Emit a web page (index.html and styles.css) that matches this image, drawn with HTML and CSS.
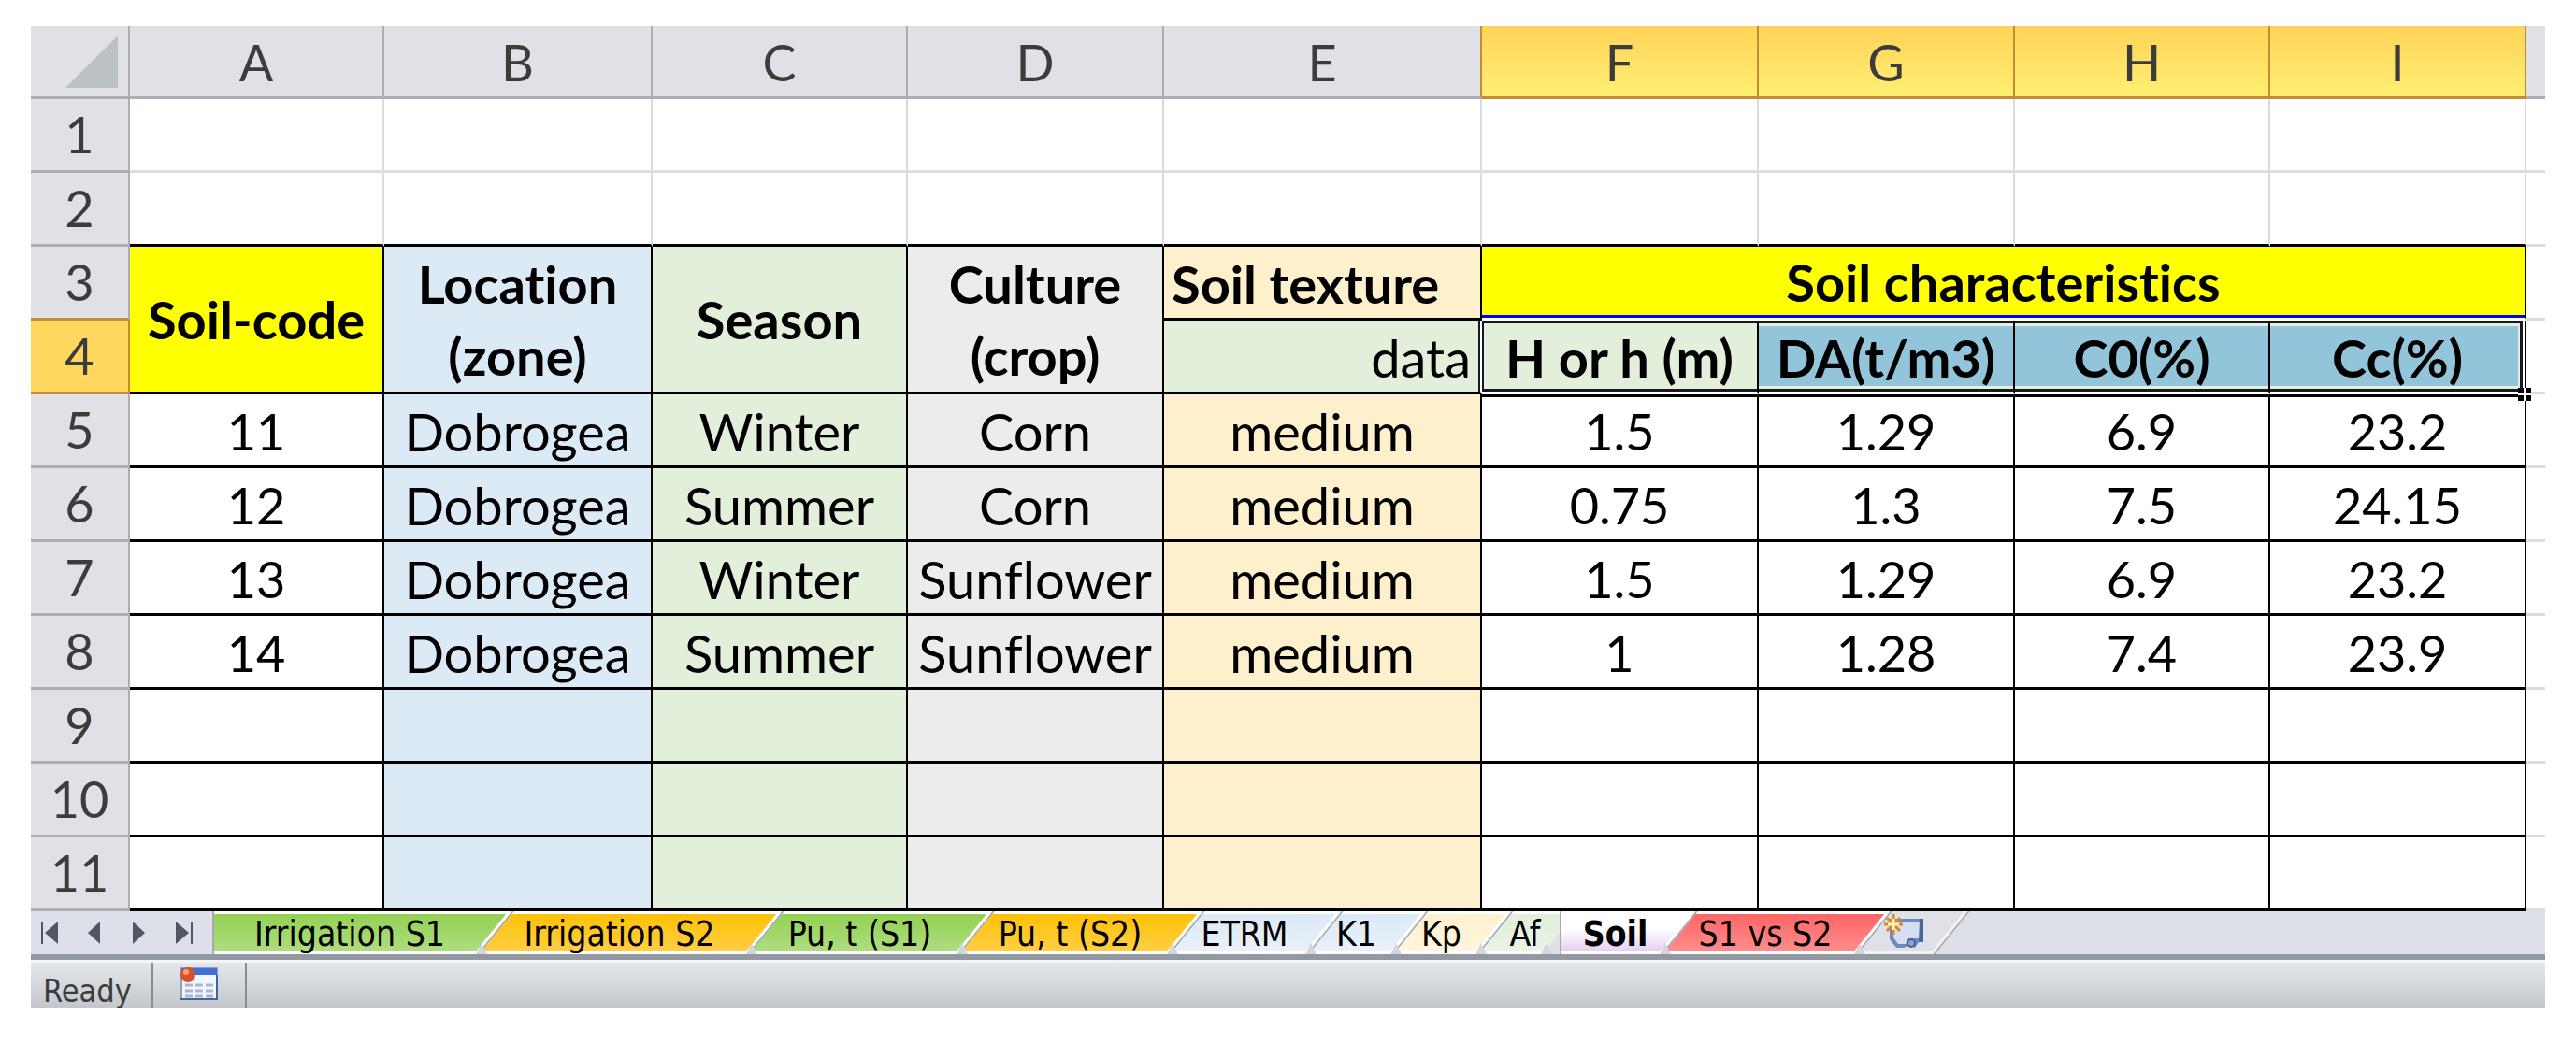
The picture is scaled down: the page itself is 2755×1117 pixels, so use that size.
FILE: index.html
```
<!DOCTYPE html>
<html lang="en">
<head>
    <meta charset="UTF-8">
    <meta name="viewport" content="width=device-width, initial-scale=1.0">
    <title>Soil</title>
    <link rel="stylesheet" href="styles.css">
</head>
<body>
    <main class="workbook">
        <table class="sheet">
            <colgroup>
                <col class="w-head">
                <col class="w-a">
                <col class="w-b">
                <col class="w-c">
                <col class="w-d">
                <col class="w-e">
                <col class="w-f">
                <col class="w-g">
                <col class="w-h">
                <col class="w-i">
                <col class="w-rest">
            </colgroup>
            <thead>
                <tr>
                    <th class="corner"><svg viewBox="0 0 56 56" aria-hidden="true"><path d="M56 0V56H0Z" fill="#bcc1c5"/></svg></th>
                    <th>A</th>
                    <th>B</th>
                    <th>C</th>
                    <th>D</th>
                    <th class="before-active">E</th>
                    <th class="active">F</th>
                    <th class="active">G</th>
                    <th class="active">H</th>
                    <th class="active">I</th>
                    <th class="rest"></th>
                </tr>
            </thead>
            <tbody>
                <tr><th>1</th><td></td><td></td><td></td><td></td><td></td><td></td><td></td><td></td><td></td><td class="rest"></td></tr>
                <tr class="last-blank"><th>2</th><td></td><td></td><td></td><td></td><td></td><td></td><td></td><td></td><td></td><td class="rest"></td></tr>
            </tbody>
            <tbody class="data">
                <tr>
                    <th class="above-active">3</th>
                    <td class="title tall yellow" rowspan="2">Soil-code</td>
                    <td class="title tall blue" rowspan="2">Location<br>(zone)</td>
                    <td class="title tall green" rowspan="2">Season</td>
                    <td class="title tall gray" rowspan="2">Culture<br>(crop)</td>
                    <td class="title cream left">Soil texture</td>
                    <td class="title yellow group" colspan="4">Soil characteristics</td>
                    <td class="rest"></td>
                </tr>
                <tr>
                    <th class="active-row">4</th>
                    <td class="green right before-sel">data</td>
                    <td class="title green sel first">H or h (m)</td>
                    <td class="title teal sel">DA(t/m3)</td>
                    <td class="title teal sel">C0(%)</td>
                    <td class="title teal sel last">Cc(%)<span class="handle"></span></td>
                    <td class="rest"></td>
                </tr>
                <tr class="below-sel"><th>5</th><td class="num">11</td><td class="blue">Dobrogea</td><td class="green">Winter</td><td class="gray">Corn</td><td class="cream">medium</td><td class="num edge">1.5</td><td class="num edge">1.29</td><td class="num edge">6.9</td><td class="num edge">23.2</td><td class="rest"></td></tr>
                <tr><th>6</th><td class="num">12</td><td class="blue">Dobrogea</td><td class="green">Summer</td><td class="gray">Corn</td><td class="cream">medium</td><td class="num">0.75</td><td class="num">1.3</td><td class="num">7.5</td><td class="num">24.15</td><td class="rest"></td></tr>
                <tr><th>7</th><td class="num">13</td><td class="blue">Dobrogea</td><td class="green">Winter</td><td class="gray">Sunflower</td><td class="cream">medium</td><td class="num">1.5</td><td class="num">1.29</td><td class="num">6.9</td><td class="num">23.2</td><td class="rest"></td></tr>
                <tr><th>8</th><td class="num">14</td><td class="blue">Dobrogea</td><td class="green">Summer</td><td class="gray">Sunflower</td><td class="cream">medium</td><td class="num">1</td><td class="num">1.28</td><td class="num">7.4</td><td class="num">23.9</td><td class="rest"></td></tr>
                <tr><th>9</th><td></td><td class="blue"></td><td class="green"></td><td class="gray"></td><td class="cream"></td><td></td><td></td><td></td><td></td><td class="rest"></td></tr>
                <tr><th>10</th><td></td><td class="blue"></td><td class="green"></td><td class="gray"></td><td class="cream"></td><td></td><td></td><td></td><td></td><td class="rest"></td></tr>
                <tr><th>11</th><td></td><td class="blue"></td><td class="green"></td><td class="gray"></td><td class="cream"></td><td></td><td></td><td></td><td></td><td class="rest"></td></tr>
            </tbody>
        </table>

        <nav class="tabbar">
            <div class="arrows">
                <button aria-label="First sheet"><svg viewBox="0 0 20 24"><path d="M1 0H3V24H1ZM19 0V24L5 12Z"/></svg></button>
                <button aria-label="Previous sheet"><svg viewBox="0 0 20 24"><path d="M16 0V24L3 12Z"/></svg></button>
                <button aria-label="Next sheet"><svg viewBox="0 0 20 24"><path d="M3 0V24L16 12Z"/></svg></button>
                <button aria-label="Last sheet"><svg viewBox="0 0 20 24"><path d="M1 0V24L15 12ZM17 0H19V24H17Z"/></svg></button>
            </div>
            <div class="tabs">
                <a href="#" class="tab lime first">Irrigation S1</a>
                <a href="#" class="tab amber wide">Irrigation S2</a>
                <a href="#" class="tab lime medium">Pu, t (S1)</a>
                <a href="#" class="tab amber medium">Pu, t (S2)</a>
                <a href="#" class="tab sky etrm">ETRM</a>
                <a href="#" class="tab sky short">K1</a>
                <a href="#" class="tab sand short">Kp</a>
                <a href="#" class="tab mint af">Af</a>
                <a href="#" class="tab current" aria-current="page">Soil</a>
                <a href="#" class="tab red compare">S1 vs S2</a>
                <a href="#" class="tab new" aria-label="Insert worksheet">
                    <svg viewBox="0 0 44 40">
                        <path d="M6 6H42V31H37L33 37L27 34L21 37H13L6 28Z" fill="#6f89bf"/>
                        <path d="M10 9H38V27H26L23 33H15L10 26Z" fill="#d3def3"/>
                        <path d="M38 6H42V31H37Z" fill="#4d6296"/>
                        <circle cx="29" cy="32" r="4" fill="#86a4d8" stroke="#4d6296" stroke-width="2"/>
                        <path d="M10 1V23M0 12H20M3 5L17 19M17 5L3 19" stroke="#d98a1c" stroke-width="3"/>
                        <path d="M10 6V18M4 12H16" stroke="#fff3bd" stroke-width="3"/>
                    </svg>
                </a>
            </div>
        </nav>

        <footer class="status">
            <span class="ready">Ready</span>
            <button class="macro" aria-label="Record macro">
                <svg viewBox="0 0 40 36">
                    <rect x="1" y="1" width="38" height="33" fill="#f2f6fd" stroke="#8ba0c8" stroke-width="2"/>
                    <path d="M1 1H39V8H1Z" fill="#3f70d4"/>
                    <path d="M5 19H35M5 25H35M5 31H35" stroke="#a7b6d3" stroke-width="3" stroke-dasharray="8 3"/>
                    <path d="M0 34H40M39 8V35" stroke="#44639d" stroke-width="2"/>
                    <circle cx="8" cy="8" r="8" fill="#d9512c"/>
                    <circle cx="6" cy="5" r="3" fill="#f2a184"/>
                </svg>
            </button>
        </footer>
    </main>
</body>
</html>
```
FILE: styles.css
```
body {
    margin: 0;
    background: white;
    font-family: Lato, "Liberation Sans", sans-serif;
    color: black;
}
.workbook {
    margin: 28px 33px;
}

/* grid */
.sheet {
    width: 100%;
    table-layout: fixed;
    border-collapse: separate;
    border-spacing: 0;
    font-variant-ligatures: none;
}
.w-head { width: 106px; }
.w-a { width: 272px; }
.w-b { width: 287px; }
.w-c { width: 273px; }
.w-d { width: 274px; }
.w-e { width: 340px; }
.w-f { width: 296px; }
.w-g { width: 274px; }
.w-h { width: 273px; }
.w-i { width: 274px; }
.w-rest { width: 20px; }
.sheet th,
.sheet td {
    box-sizing: border-box;
    height: 79px;
    padding: 0;
    border-right: 2px solid #dadcdd;
    border-bottom: 3px solid #dadcdd;
    text-align: center;
    white-space: nowrap;
}
.sheet td {
    padding-top: 4px;
    font-size: 56px;
    line-height: 72px;
}
.sheet .num {
    font-size: 54px;
}
.sheet th {
    background: #dfe1e6;
    border-color: #abafb5;
    color: #3c3c3c;
    font-size: 54px;
    line-height: 76px;
    font-weight: normal;
}
.sheet thead th {
    height: 78px;
    padding-top: 2px;
    line-height: 73px;
}
.sheet thead .corner {
    padding-top: 0;
    text-align: right;
    line-height: 0;
}
.corner svg {
    width: 56px;
    height: 56px;
    padding-right: 11px;
}
.sheet .active {
    background: linear-gradient(#ffd358, #ffef73);
    border-color: #c68c31;
}
.sheet .before-active {
    border-right-color: #c68c31;
}
.sheet .active-row {
    background: #ffd75f;
    border-color: #c68c31;
}
.sheet .above-active {
    border-bottom-color: #c68c31;
}
.sheet .last-blank td,
.sheet .data td {
    border-bottom-color: black;
}
.sheet .data td {
    border-right-color: black;
}
.sheet .rest,
.sheet .data .rest,
.sheet .last-blank .rest {
    border-right: 0;
    border-bottom-color: #dadcdd;
}
.sheet thead .rest {
    border-bottom-color: #abafb5;
}
.sheet .title {
    font-weight: bold;
}
.sheet .tall {
    padding-top: 0;
    line-height: 77px;
}
.sheet .left {
    padding-left: 8px;
    text-align: left;
}
.sheet .right {
    padding-right: 10px;
    text-align: right;
}
.yellow { background: #ffff00; }
.blue { background: #dceaf5; }
.green { background: #e2efda; }
.gray { background: #ececec; }
.cream { background: #fff0cd; }
.teal { background: #92c5da; }

/* selected range F4:I4 */
.sheet .data .group {
    padding-top: 0;
    border-bottom-color: white;
    box-shadow: inset 0 -3px #0000ff;
}
.sheet .data .before-sel {
    border-right-color: white;
    box-shadow: inset -2px 0 #1a1626;
}
.sheet .data .sel {
    border-bottom-color: white;
    box-shadow: inset 0 3px #1a1626, inset 0 -3px #1a1626, inset 0 6px #e2efda, inset 0 -6px #e2efda;
}
.sheet .data .first {
    box-shadow: inset 2px 3px #1a1626, inset 0 -3px #1a1626;
}
.sheet .data .last {
    position: relative;
    border-right-color: black;
    box-shadow: inset -2px 0 white, inset 0 3px #1a1626, inset -5px -3px #1a1626, inset 0 6px #e2efda, inset -7px -6px #e2efda;
}
.below-sel .edge {
    box-shadow: inset 0 3px black;
}
.handle {
    position: absolute;
    right: -7px;
    bottom: -10px;
    z-index: 1;
    width: 14px;
    height: 14px;
    background: linear-gradient(white, white) center / 2px 100% no-repeat, linear-gradient(white, white) center / 100% 2px no-repeat, black;
}

/* sheet tabs */
.tabbar {
    display: flex;
    height: 46px;
    background: #dde0e8;
    border-bottom: 6px solid #9299a3;
    font-family: "DejaVu Sans Condensed", "Noto Sans", sans-serif;
    font-size: 37px;
}
.arrows {
    display: flex;
    align-items: center;
    justify-content: space-between;
    box-sizing: border-box;
    width: 194px;
    padding: 0 20px 0 10px;
}
.arrows button {
    width: 20px;
    padding: 0;
    border: 0;
    background: none;
    line-height: 0;
}
.arrows svg {
    width: 20px;
    height: 24px;
    fill: #4f5763;
}
.tabs {
    display: flex;
    overflow: hidden;
    padding-right: 24px;
    border-left: 2px solid #a5aab3;
}
.tab {
    position: relative;
    z-index: 0;
    box-sizing: border-box;
    flex: none;
    padding-right: 22px;
    color: black;
    line-height: 50px;
    text-align: center;
    text-decoration: none;
    white-space: nowrap;
}
.tab::before {
    content: "";
    position: absolute;
    inset: 0;
    z-index: -1;
    border-left: 2px solid #a5aab3;
    box-shadow: -4px 0 white, inset 0 3px white, inset 0 -3px white;
    transform: skewX(-39deg);
}
.tab::after {
    content: "";
    position: absolute;
    left: -20px;
    bottom: 0;
    z-index: -1;
    width: 12px;
    height: 12px;
    background: #d2d6de;
    clip-path: polygon(50% 0, 100% 100%, 0 100%);
}
.tab.wide { width: 289px; }
.tab.medium { width: 225px; }
.tab.etrm { width: 148px; }
.tab.short { width: 91px; }
.tab.af {
    width: 70px;
    padding-right: 4px;
}
.tab.current {
    width: 127px;
    padding-right: 8px;
    font-weight: bold;
}
.tab.compare { width: 208px; }
.tab.new {
    width: 85px;
    padding: 0 0 0 12px;
    line-height: 0;
    text-align: left;
}
.tab.first {
    width: 300px;
    padding-right: 10px;
}
.tab.first::before {
    left: -40px;
}
.tab.current::before {
    right: -20px;
    transform: none;
    box-shadow: none;
    clip-path: polygon(0 0, 100% 0, calc(100% - 38px) 100%, 0 100%);
}
.tab.new::before {
    border-right: 2px solid #a5aab3;
    box-shadow: -4px 0 white, inset -4px -3px #f2f3f5;
}
.tab.new svg {
    width: 44px;
    height: 40px;
    margin-top: 2px;
}
.lime::before { background: linear-gradient(#92d050, #b0de83); }
.amber::before { background: linear-gradient(#ffc000, #ffd04a); }
.sky::before { background: linear-gradient(#dbe9f6, #eaf2fa); }
.sand::before { background: linear-gradient(#fff0cd, #fff6e0); }
.mint::before { background: linear-gradient(#e0eeda, #ebf4e6); }
.red::before { background: linear-gradient(#ff6262, #ff9090); }
.current::before { background: linear-gradient(white 40%, #e4d0f2 92%, white 93%); }
.new::before { background: #dfe1e6; }

/* status bar */
.status {
    display: flex;
    box-sizing: border-box;
    height: 52px;
    border-top: 3px solid #f3f5f8;
    background: linear-gradient(#e4e7ec, #c3c7cb);
    font-family: "DejaVu Sans Condensed", "Noto Sans", sans-serif;
    font-size: 34px;
    line-height: 60px;
    color: #3c3c3c;
}
.ready {
    box-sizing: border-box;
    width: 131px;
    padding-left: 13px;
    border-right: 2px solid #888d94;
}
.macro {
    width: 100px;
    padding: 0 0 4px;
    border: 0;
    border-right: 2px solid #888d94;
    background: none;
    line-height: 0;
}
.macro svg {
    width: 40px;
    height: 36px;
}
```
